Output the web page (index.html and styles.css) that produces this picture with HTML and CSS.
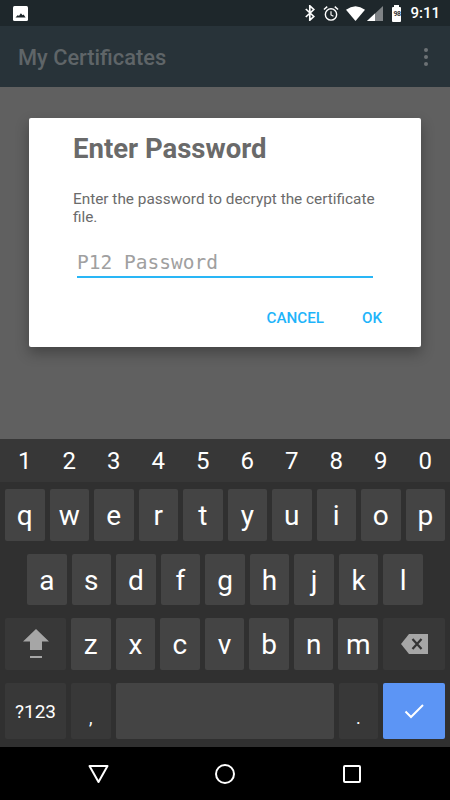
FILE: index.html
```html
<!DOCTYPE html>
<html lang="en">
<head>
<meta charset="utf-8">
<title>My Certificates</title>
<link rel="stylesheet" href="styles.css">
</head>
<body>
<div class="screen">
  <header class="status">
    <svg class="ic-image" width="15" height="15" viewBox="0 0 15 15"><rect width="15" height="15" rx="1.500" fill="#fff"/><path d="M2.500 11.500l2.400-2.600 1 1 2-2.700 1.700 2.100 1-.8 2 3z" fill="#1e272b"/></svg>
    <div class="status-right">
      <svg class="ic-bt" width="10" height="16" viewBox="0 0 10 16"><path d="M.8 4l8 7.500-4 3.700V.8l4 3.700-8 7.500" fill="none" stroke="#fff" stroke-width="1.700"/></svg>
      <svg class="ic-alarm" width="16" height="17" viewBox="0 0 17 17"><circle cx="8.500" cy="9.500" r="6" fill="none" stroke="#fff" stroke-width="1.500"/><path d="M8.500 6v4l2.600 1.500" fill="none" stroke="#fff" stroke-width="1.200"/><path d="M1 4.200L4.500 1.200M16 4.200L12.500 1.200" stroke="#fff" stroke-width="1.600"/></svg>
      <svg class="ic-wifi" width="19" height="15" viewBox="0 0 20 15" preserveAspectRatio="none"><path d="M0 3.800Q10-3.200 20 3.800L10 15z" fill="#fff"/></svg>
      <svg class="ic-signal" width="16" height="15" viewBox="0 0 16 15"><path d="M16 0v15H0z" fill="#7f8386"/><path d="M8 7.500V15H0z" fill="#fff"/></svg>
      <div class="battery"><span class="battery-label">98</span></div>
      <span class="clock">9:11</span>
    </div>
  </header>
  <div class="appbar">
    <h1 class="appbar-title">My Certificates</h1>
    <div class="overflow"><i></i><i></i><i></i></div>
  </div>
  <main class="content">
    <section class="dialog">
      <h2 class="dialog-title">Enter Password</h2>
      <p class="dialog-text">Enter the password to decrypt the certificate file.</p>
      <div class="field">P12 Password</div>
      <div class="actions">
        <span class="action">CANCEL</span>
        <span class="action">OK</span>
      </div>
    </section>
  </main>
  <section class="keyboard">
    <div class="numbers">
      <span>1</span><span>2</span><span>3</span><span>4</span><span>5</span><span>6</span><span>7</span><span>8</span><span>9</span><span>0</span>
    </div>
    <div class="row row-top">
      <span class="key">q</span><span class="key">w</span><span class="key">e</span><span class="key">r</span><span class="key">t</span><span class="key">y</span><span class="key">u</span><span class="key">i</span><span class="key">o</span><span class="key">p</span>
    </div>
    <div class="row row-home">
      <span class="key">a</span><span class="key">s</span><span class="key">d</span><span class="key">f</span><span class="key">g</span><span class="key">h</span><span class="key">j</span><span class="key">k</span><span class="key">l</span>
    </div>
    <div class="row row-bottom">
      <span class="key key-fn">
        <svg width="28" height="30" viewBox="0 0 28 30"><path d="M14 0L27 12.500H20V21H8V12.500H1z" fill="#a6a6a6"/><rect x="8" y="27" width="12" height="2" fill="#a6a6a6"/></svg>
      </span>
      <span class="key">z</span><span class="key">x</span><span class="key">c</span><span class="key">v</span><span class="key">b</span><span class="key">n</span><span class="key">m</span>
      <span class="key key-fn">
        <svg width="27" height="20" viewBox="0 0 27 20"><path d="M8 0H27V20H8L0 10z" fill="#a6a6a6"/><path d="M11.500 5l9 10M20.500 5l-9 10" stroke="#333" stroke-width="2.200"/></svg>
      </span>
    </div>
    <div class="row row-space">
      <span class="key key-fn key-sym">?123</span>
      <span class="key key-fn key-punct">,</span>
      <span class="key key-spacebar"></span>
      <span class="key key-fn key-punct">.</span>
      <span class="key key-enter">
        <svg width="20" height="16" viewBox="0 0 20 16"><path d="M1.500 8.500l5.500 5.500L19 2" fill="none" stroke="#fff" stroke-width="2"/></svg>
      </span>
    </div>
  </section>
  <nav class="navbar">
    <svg width="21" height="20" viewBox="0 0 21 20"><path d="M1.500 2h18l-9 16z" fill="none" stroke="#fff" stroke-width="2" stroke-linejoin="round"/></svg>
    <svg width="20" height="20" viewBox="0 0 20 20"><circle cx="10" cy="10" r="9" fill="none" stroke="#fff" stroke-width="2"/></svg>
    <svg class="nav-recents" width="18" height="18" viewBox="0 0 18 18"><rect x="1" y="1" width="16" height="16" rx="1" fill="none" stroke="#fff" stroke-width="2"/></svg>
  </nav>
</div>
</body>
</html>
```
FILE: styles.css
```css
* { box-sizing: border-box; }
html, body { margin: 0; padding: 0; }
body { width: 450px; height: 800px; overflow: hidden; font-family: Roboto, "Liberation Sans", sans-serif; background: #000; }
.screen { width: 450px; height: 800px; display: flex; flex-direction: column; }

.status { height: 26px; background: #1e272b; display: flex; align-items: center; justify-content: space-between; padding: 0 10px 0 13px; flex: none; }
.status-right { display: flex; align-items: center; }
.ic-bt { margin-right: 8px; }
.ic-alarm { margin-right: 7px; }
.ic-wifi { margin-right: 2px; }
.ic-signal { margin-right: 9px; }
.battery { width: 9px; height: 15px; background: #fff; border-radius: 1px; position: relative; display: flex; align-items: center; justify-content: center; margin: 2px 9px 0 0; }
.battery::before { content: ""; position: absolute; top: -2px; left: 2px; width: 5px; height: 2px; background: #fff; }
.battery-label { font-size: 7px; font-weight: 700; color: #333; letter-spacing: -0.5px; }
.clock { color: #fff; font-size: 15px; font-weight: 500; }

.appbar { height: 61px; background: #283339; display: flex; align-items: center; justify-content: space-between; padding: 0 22px 0 18px; flex: none; }
.appbar-title { margin: 2px 0 0; font-size: 21.800px; font-weight: 500; color: #5f6568; }
.overflow { display: flex; flex-direction: column; gap: 3px; }
.overflow i { display: block; width: 4px; height: 4px; border-radius: 50%; background: #6c7275; }

.content { height: 352px; background: #606060; padding: 31px 29px 0; flex: none; }
.dialog { height: 229px; background: #fff; border-radius: 2px; box-shadow: 0 6px 14px rgba(0,0,0,.3); padding: 15px 44px 0 44px; }
.dialog-title { margin: 0; font-size: 27.500px; line-height: 32px; font-weight: 700; color: #6a6a6a; }
.dialog-text { margin: 25px 0 0; font-size: 15.350px; line-height: 18px; color: #6b6b6b; }
.field { margin: 22px 4px 0 4px; border-bottom: 2px solid #29b6f6; font-family: "DejaVu Sans Mono", monospace; font-size: 19.500px; line-height: 30px; height: 30px; color: #a0a0a0; }
.actions { display: flex; justify-content: flex-end; gap: 38px; margin: 30px -5px 0 0; }
.action { font-size: 15.200px; line-height: 20px; font-weight: 500; color: #1eb4fa; }

.keyboard { height: 308px; background: #303030; flex: none; color: #fff; }
.numbers { height: 43px; background: #373737; display: grid; grid-template-columns: repeat(10, 1fr); gap: 5px; padding: 1px 5px 0; align-items: center; text-align: center; font-size: 24px; }
.row { display: grid; gap: 5px; padding: 0 5px; }
.row-top { grid-template-columns: repeat(10, 1fr); height: 52px; margin-top: 7px; }
.row-home { grid-template-columns: repeat(9, 1fr); height: 51px; margin-top: 13px; padding: 0 27px; }
.row-bottom { grid-template-columns: 61px repeat(7, 1fr) 62px; height: 52px; margin-top: 13px; }
.row-space { grid-template-columns: 61px 1fr 218px 1fr 62px; height: 56px; margin-top: 13px; }
.key { background: #444; border-radius: 2px; display: flex; align-items: center; justify-content: center; font-size: 28px; line-height: 1; padding-top: 2px; }
.key-fn { background: #383838; padding-top: 0; }
.key-sym { font-size: 19px; }
.key-fn.key-punct { font-size: 18px; padding-top: 14px; }
.key-spacebar { background: #444; }
.key-enter { background: #5c95f5; padding-top: 0; }

.navbar { height: 53px; background: #000; flex: none; display: flex; align-items: center; padding: 0 0 0 88px; gap: 106px; }
.nav-recents { margin-left: 2px; }
```
